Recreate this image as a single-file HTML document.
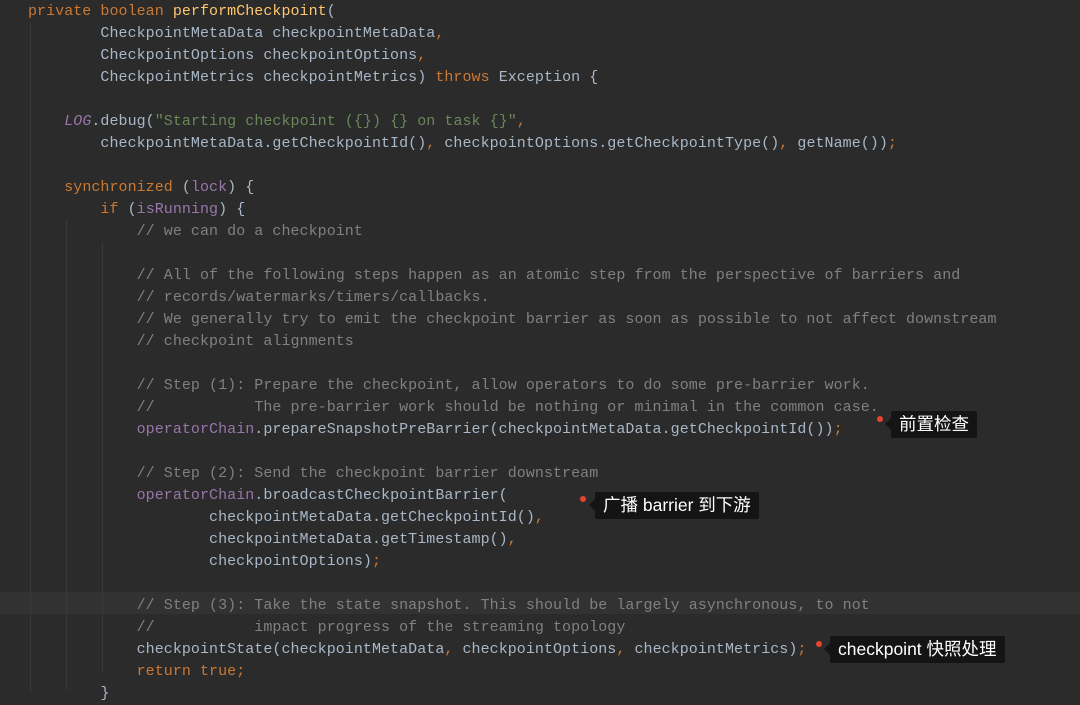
<!DOCTYPE html>
<html><head><meta charset="utf-8"><style>
body{margin:0;width:1080px;height:701px;background:#2b2b2b;overflow:hidden;position:relative}
pre{margin:0;position:absolute;left:28px;top:1px;font-family:"Liberation Mono",monospace;font-size:15px;line-height:22px;color:#a9b7c6;letter-spacing:0.05px}
.k{color:#cc7832}.m{color:#ffc66d}.c{color:#808080}.s{color:#6a8759}.f{color:#9876aa}.i{font-style:italic}
.hl{position:absolute;left:0;top:592px;width:1080px;height:22px;background:#323232}
.g{position:absolute;width:1px;background:#393939}
.lab{position:absolute;background:#141414;color:#fff;font-family:"Liberation Sans","Noto Sans CJK SC",sans-serif;font-size:17.5px;line-height:27px;padding:0 8px;border-radius:2px}
.lab:before{content:"";position:absolute;left:-6px;top:7px;border:6px solid transparent;border-left:0;border-right-color:#141414}
.d{position:absolute;width:6px;height:6px;border-radius:50%;background:#e8432c}
</style></head><body>
<div class="hl"></div>
<div class="g" style="left:30px;top:22px;height:670px"></div>
<div class="g" style="left:66px;top:220px;height:470px"></div>
<div class="g" style="left:102px;top:242px;height:430px"></div>
<pre><span class="k">private boolean </span><span class="m">performCheckpoint</span>(
        CheckpointMetaData checkpointMetaData<span class="k">,</span>
        CheckpointOptions checkpointOptions<span class="k">,</span>
        CheckpointMetrics checkpointMetrics) <span class="k">throws </span>Exception {

    <span class="f i">LOG</span>.debug(<span class="s">"Starting checkpoint ({}) {} on task {}"</span><span class="k">,</span>
        checkpointMetaData.getCheckpointId()<span class="k">, </span>checkpointOptions.getCheckpointType()<span class="k">, </span>getName())<span class="k">;</span>

    <span class="k">synchronized </span>(<span class="f">lock</span>) {
        <span class="k">if </span>(<span class="f">isRunning</span>) {
            <span class="c">// we can do a checkpoint</span>

            <span class="c">// All of the following steps happen as an atomic step from the perspective of barriers and</span>
            <span class="c">// records/watermarks/timers/callbacks.</span>
            <span class="c">// We generally try to emit the checkpoint barrier as soon as possible to not affect downstream</span>
            <span class="c">// checkpoint alignments</span>

            <span class="c">// Step (1): Prepare the checkpoint, allow operators to do some pre-barrier work.</span>
            <span class="c">//           The pre-barrier work should be nothing or minimal in the common case.</span>
            <span class="f">operatorChain</span>.prepareSnapshotPreBarrier(checkpointMetaData.getCheckpointId())<span class="k">;</span>

            <span class="c">// Step (2): Send the checkpoint barrier downstream</span>
            <span class="f">operatorChain</span>.broadcastCheckpointBarrier(
                    checkpointMetaData.getCheckpointId()<span class="k">,</span>
                    checkpointMetaData.getTimestamp()<span class="k">,</span>
                    checkpointOptions)<span class="k">;</span>

            <span class="c">// Step (3): Take the state snapshot. This should be largely asynchronous, to not</span>
            <span class="c">//           impact progress of the streaming topology</span>
            checkpointState(checkpointMetaData<span class="k">, </span>checkpointOptions<span class="k">, </span>checkpointMetrics)<span class="k">;</span>
            <span class="k">return true;</span>
        }</pre>
<div class="d" style="left:877px;top:416px"></div>
<div class="lab" style="left:891px;top:411px">前置检查</div>
<div class="d" style="left:580px;top:496px"></div>
<div class="lab" style="left:595px;top:492px">广播 barrier 到下游</div>
<div class="d" style="left:816px;top:641px"></div>
<div class="lab" style="left:830px;top:636px">checkpoint 快照处理</div>
</body></html>
